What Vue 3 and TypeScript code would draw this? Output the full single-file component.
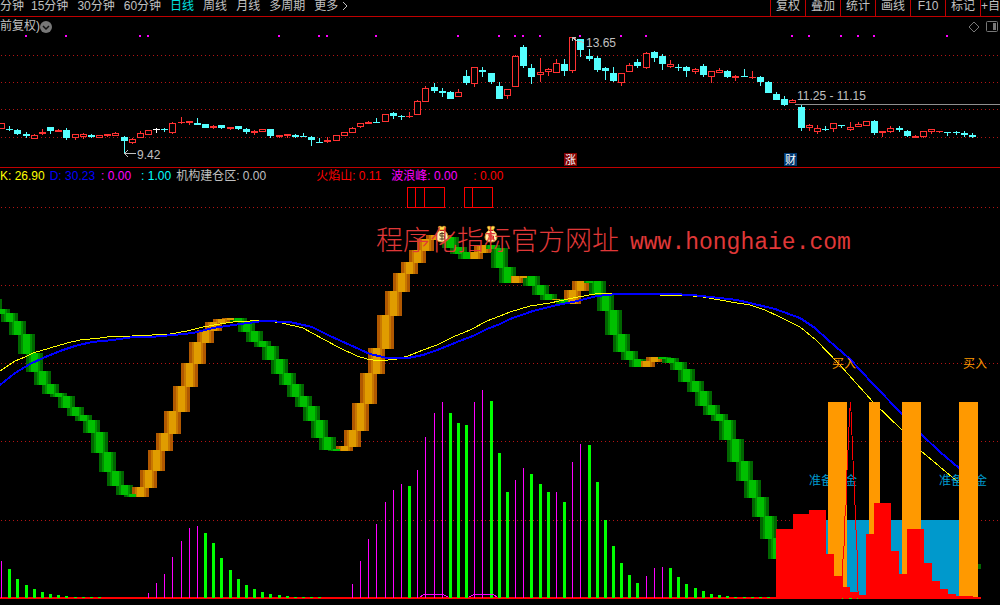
<script setup lang="ts">
type Candle = [kind: string, top: number, bottom: number, high?: number, low?: number]

const slot = (i: number): number => Math.floor(1.65 + i * 8.158)

// h = hollow red, r = solid red, c = cyan, w = white
const candles: Candle[] = [
  ['h', 123, 129], ['c', 129, 130, 126, 131], ['c', 130, 134, 129, 135], ['c', 134, 136, 132, 138],
  ['h', 135, 139, 134], ['r', 132, 134, 129, 135], ['c', 127, 131, 127, 134], ['r', 130, 132, 129],
  ['c', 130, 138, 128, 140], ['h', 134, 138, 134, 140], ['h', 134, 137, 133, 139], ['c', 135, 137, 134, 138],
  ['h', 135, 138], ['r', 134, 136, 134, 137], ['h', 133, 136, 132], ['c', 137, 141, 136, 153],
  ['h', 139, 143, 138, 144], ['h', 133, 138, 131], ['h', 130, 135], ['w', 129, 130, 128, 133],
  ['c', 129, 130, 128, 132], ['h', 123, 133, 122, 134], ['r', 122, 123, 117, 124], ['r', 121, 123, 121, 125],
  ['c', 123, 125, 118], ['c', 124, 128], ['r', 126, 128, 125, 129], ['c', 125, 128, 125, 129],
  ['r', 127, 129, 127, 130], ['c', 126, 129, 126, 130], ['c', 129, 132, 128, 134], ['r', 131, 133, 130, 135],
  ['h', 129, 132], ['c', 129, 136, 129, 138], ['r', 135, 137, 135, 138], ['r', 134, 136, 134, 138],
  ['c', 135, 137, 134, 138], ['c', 136, 137, 133], ['c', 137, 140, 136, 146], ['c', 142, 143, 138],
  ['r', 140, 142, 137, 143], ['h', 135, 141], ['h', 132, 136], ['h', 128, 133, 127],
  ['h', 123, 127, 123, 128], ['r', 122, 124, 121], ['c', 122, 123, 118], ['h', 114, 122],
  ['c', 113, 116, 112, 119], ['c', 116, 117, 115, 120], ['r', 116, 117, 112, 118], ['h', 101, 115, 100],
  ['h', 88, 102, 86], ['c', 87, 91, 83, 93], ['c', 91, 93, 88, 97], ['c', 92, 99, 91],
  ['h', 92, 97, 89], ['c', 76, 83, 70, 85], ['h', 67, 84, 67, 87], ['c', 70, 72, 67, 77],
  ['c', 73, 82, 73, 84], ['c', 86, 99, 82], ['h', 89, 96, 89, 99], ['h', 56, 87, 55],
  ['c', 47, 66, 45, 68], ['c', 68, 77, 64, 84], ['h', 72, 75, 58, 82], ['h', 69, 72, 68, 76],
  ['h', 63, 73, 59], ['c', 64, 71, 59, 76], ['h', 37, 71, 37, 73], ['c', 39, 50, 39, 57],
  ['c', 56, 59, 49, 61], ['c', 58, 70, 56, 72], ['c', 68, 71, 67, 80], ['c', 73, 81, 67, 82],
  ['h', 73, 83, 73, 86], ['h', 65, 72, 63], ['c', 62, 66, 59, 68], ['h', 53, 68, 52, 69],
  ['c', 52, 58, 51, 62], ['c', 56, 64, 54, 70], ['h', 64, 67, 60, 68], ['c', 67, 68, 64, 71],
  ['c', 67, 71, 66, 77], ['h', 69, 72, 68, 74], ['c', 66, 75, 64, 77], ['h', 71, 77, 71, 83],
  ['h', 70, 73, 68], ['c', 71, 77, 70, 78], ['r', 76, 78, 75, 81], ['c', 76, 77, 69],
  ['r', 77, 78, 71, 79], ['c', 77, 82, 76, 86], ['c', 82, 93, 81], ['c', 94, 100, 92],
  ['c', 99, 105, 96, 106], ['h', 100, 103, 99], ['c', 107, 128, 105, 131], ['h', 125, 128, 124, 131],
  ['h', 128, 132, 125, 134], ['c', 129, 130, 126, 131], ['h', 123, 129, 123, 132], ['c', 125, 126, 125, 128],
  ['h', 127, 130, 122, 131], ['h', 124, 127, 122], ['h', 121, 126], ['c', 121, 133, 120, 135],
  ['r', 131, 133, 131, 137], ['h', 128, 132, 126, 133], ['c', 128, 130, 126, 132], ['c', 131, 136, 130, 137],
  ['r', 136, 138, 135], ['h', 131, 137, 131, 138], ['h', 129, 132, 129, 134], ['r', 131, 132, 131, 133],
  ['c', 132, 133, 132, 136], ['c', 132, 133, 131, 135], ['c', 133, 135, 131, 137], ['c', 135, 137, 133, 138],
]
const candleColor: Record<string, string> = { h: '#ff3232', r: '#ff3232', c: '#54ffff', w: '#ffffff' }

const signals = [26, 66, 140, 148, 279, 319, 327, 376, 458, 499, 515, 523, 540, 580, 621, 646, 792, 809, 841, 858, 874, 947]

// Staircase band: top, bottom and trend of each period, starting one period before the left edge
type Step = [top: number, bottom: number, up?: 1]
const steps: Step[] = [
  [299, 309], [309, 314], [313, 322], [321, 335], [334, 354], [353, 372], [371, 385], [384, 394], [393, 397],
  [396, 408], [407, 416], [415, 421], [420, 433], [432, 453], [452, 472], [471, 486], [485, 495], [494, 497],
  [487, 497, 1], [470, 488, 1], [450, 471, 1], [433, 451, 1], [411, 434, 1], [386, 412, 1], [363, 387, 1],
  [342, 364, 1], [330, 343, 1], [322, 331, 1], [319, 323, 1], [318, 320, 1],
  [318, 322], [321, 332], [331, 342], [341, 347], [346, 360], [359, 374], [373, 385], [384, 397], [396, 407],
  [406, 421], [420, 438], [437, 450], [449, 451],
  [446, 451, 1], [430, 447, 1], [403, 431, 1], [373, 404, 1], [348, 374, 1], [315, 349, 1], [291, 316, 1],
  [273, 292, 1], [262, 274, 1], [250, 263, 1], [239, 251, 1], [235, 240, 1], [235, 237, 1],
  [237, 248], [247, 254], [252, 259], [252, 259, 1], [245, 253, 1],
  [245, 249], [248, 268], [267, 283], [276, 283, 1], [276, 278, 1],
  [276, 286], [285, 295], [294, 300], [299, 300, 1], [299, 304], [290, 304, 1], [281, 291, 1],
  [281, 283], [281, 295], [294, 311], [310, 335], [334, 352], [351, 360], [359, 367],
  [361, 367, 1], [357, 362, 1],
  [357, 359], [358, 363], [362, 370], [369, 382], [381, 392], [391, 406], [405, 415], [414, 421],
  [420, 440], [439, 462], [461, 481], [480, 498], [497, 517], [516, 539], [538, 559],
]
const shades = [
  { half: 8, width: 17, up: '#b05800', down: '#006600' },
  { half: 5, width: 11, up: '#c87800', down: '#009000' },
  { half: 3, width: 7, up: '#e09c00', down: '#00c000' },
]

// Histogram tops; negative values are the thin rising bars
const histogram: Record<number, number[]> = {
  0: [-561, 569, 579, 585, 589, 592, 594, 595, 596, 597, 597, 597, 597],
  18: [-593, -583, -574, -557, -541, -528, -526, 533, 543, 558, 570, 579, 585, 589, 592, 594, 595, 596, 597, 597, 597, 597],
  43: [-584, -561, -539, -524, -502, -490, -484, 486, -470, -437, -413, -402, 413, 423, 425, -402, -390, 401, 453, 492,
    -480, -468, 474, 484, 492, -492, 502, -462, -444, 445, 482, 520, 546, 563, 575, 583, -576, -568, -567, 568, 577,
    584, 588, 591, 594, 595, 596, 597, 597, 597, 597, 597],
}
const bars = Object.entries(histogram).flatMap(([start, tops]) =>
  tops.map((t, k) => ({ x: slot(Number(start) + k), top: Math.abs(t), rising: t < 0 })),
)

const yellowLine =
  '0,371 15,361 25,357 33,353 50,348 67,343 80,340 100,338 115,336 132,336 152,335 170,334 187,331 203,327 220,324 233,322 250,321 262,320 282,323 303,328 323,339 340,348 357,356 367,359 373,360 388,360 397,359 408,356 423,350 437,345 453,337 470,330 487,321 500,316 510,312 530,306 550,303 573,298 595,294 613,293 633,294 660,295 693,296 703,297 720,300 737,303 750,305 765,310 780,317 800,327 816,340 840,365 873,402 902,430 921,451 958,482'
const blueLine =
  '0,385 15,373 30,364 43,358 60,351 75,346 92,342 113,340 133,337 150,337 173,335 193,333 213,328 233,325 263,321 290,322 312,327 330,336 350,345 370,354 387,358 408,358 423,355 440,349 457,342 473,336 487,329 500,324 510,319 533,311 557,305 573,302 597,296 617,294 670,294 693,295 710,297 737,300 750,303 775,309 800,318 815,328 828,340 850,359 873,384 902,414 921,434 940,452 959,468'

const mountain =
  'M776 599V529H793V514H809V510H826V554H834V576H843V587H850V592H858V595H866V534H874V503H891V551H899V574H907V529H924V563H932V581H940V589H948V594H956V596H973V597H981V599Z'

const periods = ['分钟', '15分钟', '30分钟', '60分钟', '日线', '周线', '月线', '多周期', '更多']
const tools = ['复权', '叠加', '统计', '画线', 'F10', '标记', '+自']
</script>

<template>
  <main class="terminal">
    <header class="toolbar">
      <nav class="periods">
        <button v-for="p in periods" :key="p" type="button" :class="{ active: p === '日线' }">{{ p }}</button>
        <svg class="more" viewBox="0 0 6 10" aria-hidden="true"><path d="M1 1L5 5L1 9" /></svg>
      </nav>
      <div class="tools">
        <button v-for="t in tools" :key="t" type="button">{{ t }}</button>
      </div>
    </header>

    <section class="price">
      <svg class="plot" viewBox="0 17 1000 150" shape-rendering="crispEdges">
        <line v-for="y in [55, 82, 109, 137]" :key="y" class="grid" x1="1" :y1="y + 0.5" x2="1000" :y2="y + 0.5" />
        <rect v-for="x in signals" :key="x" :x="x - 1" y="35" width="2" height="2" fill="#ff00ff" />
        <path d="M795 104.5H1000" stroke="#909090" />
        <g v-for="(c, i) in candles" :key="i" :fill="candleColor[c[0]]">
          <rect :x="slot(i)" :y="c[3] ?? c[1]" width="1" :height="(c[4] ?? c[2]) - (c[3] ?? c[1])" />
          <rect :x="slot(i) - 3" :y="c[1]" width="7" :height="c[2] - c[1]" />
          <rect v-if="c[0] === 'h'" :x="slot(i) - 2" :y="c[1] + 1" width="5" :height="c[2] - c[1] - 2" fill="#000" />
        </g>
        <g fill="none" stroke="#c0c0c0">
          <path d="M124 153.5H136M128 150L124.500 153.500L128 157" />
          <path d="M576 37.500H572.500V41M573 38L577 41H580L584 43" />
        </g>
        <g class="note">
          <text x="137" y="159">9.42</text>
          <text x="586" y="47">13.65</text>
          <text x="797" y="100">11.25 - 11.15</text>
        </g>
        <rect x="564" y="153" width="13" height="13" fill="#800000" />
        <rect x="784" y="153" width="13" height="13" fill="#003870" />
        <g class="badge">
          <text x="565" y="164">涨</text>
          <text x="785" y="164">财</text>
        </g>
      </svg>
      <div class="caption">
        <span>前复权)</span>
        <button type="button" aria-label="展开">
          <svg viewBox="0 0 12 12"><circle cx="6" cy="6" r="6" fill="#777" /><path d="M3 5L6 8L9 5" fill="none" stroke="#111" stroke-width="1.500" /></svg>
        </button>
      </div>
      <div class="corner">
        <svg class="diamond" viewBox="0 0 12 12"><path d="M6 1L11 6L6 11L1 6Z" fill="none" stroke="#777" /></svg>
        <svg class="pane" viewBox="0 0 12 12"><rect x="0.500" y="0.500" width="11" height="10" rx="1" fill="none" stroke="#777" /><path d="M7 2H10V9H7Z" fill="#777" /></svg>
      </div>
    </section>

    <section class="indicator">
      <div class="legend">
        <span class="k">K: 26.90</span>
        <span class="d">D: 30.23</span>
        <span class="m">: 0.00</span>
        <span class="c">: 1.00</span>
        <span class="g">机构建仓区: 0.00</span>
        <span class="fire">火焰山: 0.11</span>
        <span class="wave">波浪峰: 0.00</span>
        <span class="r">: 0.00</span>
      </div>
      <svg class="plot" viewBox="0 185 1000 420" shape-rendering="crispEdges">
        <line v-for="y in [207, 285, 363, 441, 520]" :key="y" class="grid" x1="1" :y1="y + 0.5" x2="1000" :y2="y + 0.5" />
        <g fill="none" stroke="#ff0000">
          <path d="M407.500 187.500H444.500V207.500H407.500ZM415.500 187V207M424.500 187V207" />
          <path d="M464.500 187.500H492.500V207.500H464.500ZM472.500 187V207" />
        </g>

        <g v-for="shade in shades" :key="shade.width">
          <rect
            v-for="(s, i) in steps" :key="i"
            :x="slot(i - 1) - shade.half" :y="s[0]" :width="shade.width" :height="s[1] - s[0]"
            :fill="s[2] ? shade.up : shade.down"
          />
        </g>

        <polyline :points="yellowLine" fill="none" stroke="#ffff00" />
        <polyline :points="blueLine" fill="none" stroke="#0000ff" stroke-width="2" />

        <g class="prepare">
          <text x="809" y="485">准备资金</text>
          <text x="939" y="485">准备资金</text>
        </g>
        <rect x="826" y="520" width="133" height="78" fill="#0099cc" />
        <g fill="#ff9900">
          <rect x="828" y="402" width="19" height="196" />
          <rect x="869" y="402" width="11" height="196" />
          <rect x="902" y="402" width="19" height="196" />
          <rect x="959" y="402" width="19" height="196" />
        </g>
        <rect x="978" y="564" width="3" height="5" fill="#006600" />

        <path d="M0 597H981V599H0Z" fill="#ff0000" />
        <rect
          v-for="b in bars" :key="b.x"
          :x="b.rising ? b.x : b.x - 1" :y="b.top" :width="b.rising ? 1 : 3" :height="598 - b.top"
          :fill="b.rising ? '#ff00ff' : '#00ff00'"
        />
        <path d="M420 597L424 594.500H443L448 597M469 597L474 594.500H493L497 597" fill="none" stroke="#ff00ff" />
        <path :d="mountain" fill="#ff0000" />
        <path d="M842.500 576V566L844.500 540V521L846.500 500V480L847.500 460L848.500 440L849.500 415L850.500 402L851.500 420L852.500 450L854.500 490L855.500 520L857.500 560V585L858.500 597" fill="none" stroke="#ff0000" />
        <path d="M842 598.500H843M849 598.500H852M857 598.500H858" stroke="#00ff00" />

        <g class="buy">
          <text x="832" y="368">买入</text>
          <text x="963" y="368">买入</text>
        </g>

        <g v-for="x in [442, 491]" :key="x" shape-rendering="auto" :transform="`translate(${x} 226)`">
          <path d="M-4 1Q-2 -1 0 1Q2 -1 4 1L2 5H-2Z" fill="#ffe04a" stroke="#b06a10" stroke-width="0.500" />
          <path d="M-2 4H2Q6 7 6 11Q6 16 0 16Q-6 16 -6 11Q-6 7 -2 4Z" fill="#fff3b0" stroke="#d89020" />
          <path d="M-2 4.500H2" stroke="#c02020" />
          <path d="M2.500 7.500H-2V10H2.500V13H-2.500M0 6V14.500" fill="none" :stroke="x === 442 ? '#5a3820' : '#d02020'" />
        </g>
        <g class="watermark">
          <text class="han" x="376" y="250">程序化指标官方网址</text>
          <text class="latin" x="630" y="249">www.honghaie.com</text>
        </g>
      </svg>
    </section>
  </main>
</template>

<style>
body {
  margin: 0;
  background: #000;
}
</style>

<style scoped>
.terminal {
  min-height: 100vh;
  overflow: hidden;
  background: #000;
  color: #c0c0c0;
  font: 12px/13px "Liberation Sans", "Noto Sans CJK SC", sans-serif;
}
button {
  flex: none;
  margin: 0;
  padding: 0;
  border: 0;
  background: none;
  color: inherit;
  font: inherit;
  white-space: nowrap;
  cursor: pointer;
}
.toolbar {
  display: flex;
  justify-content: space-between;
  height: 16px;
  border-bottom: 1px solid #c00000;
}
.periods {
  display: flex;
  align-items: flex-start;
  gap: 9px;
}
.periods button:first-child {
  margin-right: -2px;
}
.periods .active {
  color: #00e0e0;
}
.more {
  width: 6px;
  height: 10px;
  margin-top: 1px;
  margin-left: -5px;
  fill: none;
  stroke: #c0c0c0;
}
.tools {
  display: flex;
  flex: none;
}
.tools button {
  display: flex;
  justify-content: center;
  width: 35px;
  border-left: 1px solid #c00000;
  box-sizing: border-box;
}
.tools button:last-child {
  justify-content: flex-start;
  width: 20px;
}
.price {
  position: relative;
  border-bottom: 1px solid #c00000;
}
.plot {
  display: block;
  width: 100%;
  height: auto;
}
.grid {
  stroke: #b41414;
  stroke-dasharray: 1 3;
}
.caption {
  position: absolute;
  top: 3px;
  left: 0;
  display: flex;
  align-items: center;
}
.caption svg {
  display: block;
  width: 12px;
  height: 12px;
}
.corner {
  position: absolute;
  top: 4px;
  right: 2px;
  display: flex;
  gap: 6px;
}
.corner svg {
  width: 12px;
  height: 12px;
}
.note {
  fill: #c0c0c0;
}
.badge {
  fill: #fff;
  font-size: 11px;
}
.buy {
  fill: #ff9900;
}
.prepare {
  fill: #0099cc;
}
.watermark {
  fill: #e03838;
}
.han {
  font-size: 27px;
  font-weight: 300;
}
.latin {
  font-family: "Liberation Mono", monospace;
  font-size: 23px;
}
.legend {
  display: flex;
  align-items: center;
  height: 17px;
  white-space: nowrap;
}
.legend span {
  margin-right: 5px;
}
.k {
  color: #ffff00;
}
.d {
  color: #0000ff;
}
.m,
.wave {
  color: #ff00ff;
}
.legend .d {
  margin-right: 6px;
}
.legend .m {
  margin-right: 10px;
}
.c {
  color: #00ffff;
}
.legend .g {
  margin-right: 50px;
}
.fire,
.r {
  color: #ff0000;
}
.legend .fire {
  margin-right: 10px;
}
.legend .wave {
  margin-right: 16px;
}
</style>
